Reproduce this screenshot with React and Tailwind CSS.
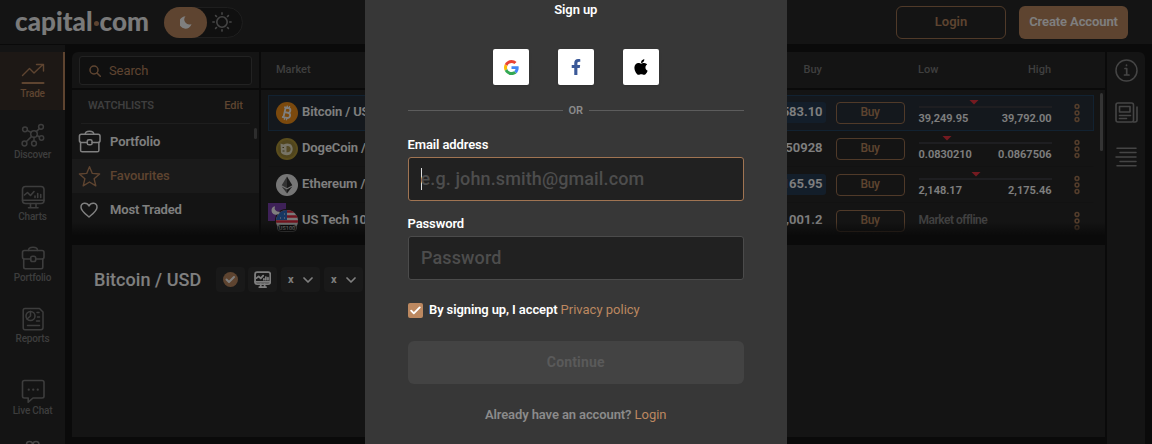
import React from "react";
import { FaFacebookF, FaApple } from "react-icons/fa";

const svg = { fill: "none", stroke: "currentColor", strokeLinecap: "round", strokeLinejoin: "round" };

function GoogleIcon() {
  return (
    <svg viewBox="0 0 48 48" className="size-[15px]">
      <path fill="#EA4335" d="M24 9.5c3.54 0 6.71 1.22 9.21 3.6l6.85-6.85C35.9 2.38 30.47 0 24 0 14.62 0 6.51 5.38 2.56 13.22l7.98 6.19C12.43 13.72 17.74 9.5 24 9.5z" />
      <path fill="#4285F4" d="M46.98 24.55c0-1.57-.15-3.09-.38-4.55H24v9.02h12.94c-.58 2.96-2.26 5.48-4.78 7.18l7.73 6c4.51-4.18 7.09-10.36 7.09-17.65z" />
      <path fill="#FBBC05" d="M10.53 28.59c-.48-1.45-.76-2.99-.76-4.59s.27-3.14.76-4.59l-7.98-6.19C.92 16.46 0 20.12 0 24c0 3.88.92 7.54 2.56 10.78l7.97-6.19z" />
      <path fill="#34A853" d="M24 48c6.48 0 11.93-2.13 15.89-5.81l-7.73-6c-2.15 1.45-4.92 2.3-8.16 2.3-6.26 0-11.57-4.22-13.47-9.91l-7.98 6.19C6.51 42.62 14.62 48 24 48z" />
    </svg>
  );
}

function TradeIcon() {
  return (
    <svg {...svg} viewBox="0 0 24 24" strokeWidth="1.4" className="size-6">
      <path d="M1.5 13.5 8.5 6.5l4.5 4.5 9-8.5M15.5 2.5H22.5v6.5" />
      <path d="M1.5 21h21" strokeWidth="2" />
    </svg>
  );
}

function DiscoverIcon() {
  return (
    <svg {...svg} viewBox="0 0 24 24" strokeWidth="1.5" className="size-6">
      <circle cx="13" cy="11" r="3.3" />
      <circle cx="4" cy="6.3" r="2.4" />
      <circle cx="20" cy="3.8" r="2.4" />
      <circle cx="20.5" cy="15" r="2.2" />
      <circle cx="3.5" cy="20.5" r="2.4" />
      <circle cx="13" cy="20.5" r="2.4" />
      <path d="m6.2 7.4 4 2.1M15.2 8.6l3.2-3M16 12.5l2.6 1.5M5.2 18.7l5.4-5.3M13 14.3v3.8" />
    </svg>
  );
}

function ChartsIcon({ className = "size-6", w = "1.6" }) {
  return (
    <svg {...svg} viewBox="0 0 24 24" strokeWidth={w} className={className}>
      <rect x="1.5" y="1.5" width="21.5" height="17" rx="3" />
      <path d="M1.5 15.2h21.5M9.5 18.5v4M15 18.5v4M7.5 22.8h9.5" />
      <path d="M3.5 10 6.5 7.5l3 3 3.5-4" />
      <path d="M14 12.5v-1.5M16.7 12.5V8.5M19.7 12.5V9.5" />
    </svg>
  );
}

function CaseIcon({ className = "size-6" }) {
  return (
    <svg {...svg} viewBox="0 0 24 24" strokeWidth="1.6" className={className}>
      <path d="M7.5 4.5C7.5 2.5 8.5 1.3 12 1.3s4.5 1.2 4.5 3.2" />
      <path d="M9.7 13H3.5c-1.3 0-2-.7-2-2V6.5c0-1.3.7-2 2-2h17.5c1.3 0 2 .7 2 2V11c0 1.3-.7 2-2 2h-6.2" />
      <path d="M2.7 13v8c0 1.2.5 1.7 1.7 1.7h15.7c1.2 0 1.7-.5 1.7-1.7v-8" />
      <rect x="9.7" y="10.2" width="5" height="5.3" rx="1.8" />
    </svg>
  );
}

function ReportsIcon() {
  return (
    <svg {...svg} viewBox="0 0 24 24" strokeWidth="1.5" className="size-6">
      <path d="M4 1.5h14.5l3.5 3.5v15.5c0 1.5-.5 2.2-2 2.2H4c-1.3 0-1.8-.7-1.8-2V3.3C2.2 2 2.8 1.5 4 1.5z" />
      <circle cx="9.5" cy="9" r="4.5" />
      <path d="M9.5 4.5V9l-3.5 3M16 5.5h2M16.5 10h2M15.5 14h3M6.5 18.5h12" />
    </svg>
  );
}

function ChatIcon() {
  return (
    <svg {...svg} viewBox="0 0 24 24" strokeWidth="1.6" className="size-6">
      <path d="M3.5 1.5h17.5c1.3 0 2 .5 2 1.8v14c0 1.2-.7 1.7-2 1.7H12l-4.8 4.2V19H3.5c-1.3 0-2-.5-2-1.7v-14c0-1.3.7-1.8 2-1.8z" />
      <path d="M7.7 10.7h.1M12.2 10.7h.1M16.7 10.7h.1" strokeWidth="2.2" />
    </svg>
  );
}

function NavItem({ icon, label, active, className = "" }) {
  return (
    <div
      className={
        "flex h-[58px] w-[65px] shrink-0 flex-col items-center border-r-2 pt-[10px] pl-[2px] " +
        (active ? "border-[#bc8860] bg-[#3a312b] text-[#bc8860] " : "border-transparent text-[#7a7a7a] ") +
        className
      }
    >
      {icon}
      <span className="mt-[2px] text-[10px] leading-[12px] font-medium tracking-[-0.2px]">{label}</span>
    </div>
  );
}

function BitcoinCoin() {
  return (
    <svg viewBox="0 0 22 22" className="size-[22px]">
      <circle cx="11" cy="11" r="11" fill="#f7931a" />
      <g transform="rotate(13 11 11)" fill="none" stroke="#fff" strokeWidth="1.8">
        <path d="M8.5 6v10M7 6h4.5c3 0 3 4.6 0 4.6H8.5h3.500c3.5 0 3.5 5.2 0 5.2H7" />
        <path d="M9.8 3.8V6M12 3.8V6M9.8 16v2.2M12 16v2.2" strokeWidth="1.3" />
      </g>
    </svg>
  );
}

function DogeCoin() {
  return (
    <svg viewBox="0 0 22 22" className="size-[22px]">
      <circle cx="11" cy="11" r="11" fill="#b59a3a" />
      <circle cx="11" cy="11" r="9" fill="#a08a3a" />
      <path d="M4.5 5.5 7.5 6.5c3-1.5 7-1.5 8.5 1.5 1.5 3 .5 6.5-2 8.5-3 1.5-7.5.5-9-2z" fill="#efe8cc" />
      <path d="M10.5 8h1.2c4 0 4 6.2 0 6.200h-1.200z" fill="#a8924a" />
      <path d="M6.5 9.5h1.5M6.5 13h2" stroke="#6e602f" strokeWidth="1.2" />
    </svg>
  );
}

function EtherCoin() {
  return (
    <svg viewBox="0 0 22 22" className="size-[22px]">
      <circle cx="11" cy="11" r="11" fill="#ececec" />
      <path d="m11 2.5-5.3 8.8L11 14.3z" fill="#666" />
      <path d="m11 2.5 5.3 8.8L11 14.3z" fill="#333" />
      <path d="M5.7 12.5 11 19.5v-4z" fill="#666" />
      <path d="M16.3 12.5 11 19.5v-4z" fill="#333" />
    </svg>
  );
}

function UsCoin() {
  return (
    <div className="relative size-[22px]">
      <svg viewBox="0 0 22 22" className="size-[22px]">
        <defs>
          <clipPath id="us-disc">
            <circle cx="11" cy="11" r="11" />
          </clipPath>
        </defs>
        <g clipPath="url(#us-disc)">
          <rect width="22" height="22" fill="#f4f4f4" />
          <path d="M0 1.5h22M0 6.5h22M0 11.5h22" stroke="#e0263c" strokeWidth="2.5" />
          <rect width="11" height="10" fill="#2f6fc4" />
          <path d="M4 8h1M8 8h1M8 4h1" stroke="#fff" strokeWidth="1.2" />
        </g>
        <rect x="1.5" y="14.5" width="19" height="7" rx="3.5" fill="#161616" stroke="#eee" strokeWidth=".8" />
        <text x="11" y="20" textAnchor="middle" fontSize="5.5" fontWeight="700" fill="#fff" fontFamily="Roboto, sans-serif">
          US100
        </text>
      </svg>
      <svg viewBox="0 0 18 18" className="absolute -top-[7px] -left-[8px] size-[18px]">
        <path d="M0 0h18v6C11 6 7 11 7 18H0z" fill="#7d42b0" />
        <path d="M7 3.2a4.3 4.3 0 1 0 5 5.3A4 4 0 0 1 7 3.2z" fill="#fff" />
      </svg>
    </div>
  );
}

const markets = [
  { name: "Bitcoin / USD", icon: <BitcoinCoin />, price: "39,583.10", low: "39,249.95", high: "39,792.00", at: 41.8, hot: true, selected: true },
  { name: "DogeCoin / USD", icon: <DogeCoin />, price: "0.0850928", low: "0.0830210", high: "0.0867506", at: 21.4 },
  { name: "Ethereum / USD", icon: <EtherCoin />, price: "2,165.95", low: "2,148.17", high: "2,175.46", at: 43, hot: true },
  { name: "US Tech 100", icon: <UsCoin />, price: "14,001.2" },
];

function MarketRow({ m }) {
  return (
    <div
      className={
        "flex h-9 shrink-0 items-center border pr-[13.5px] pb-px pl-[7px] " +
        (m.selected ? "border-[#254562] bg-[#28313a]" : "border-transparent border-b-[#242424]")
      }
    >
      {m.icon}
      <span className="ml-[4px] flex-1 pb-px text-[13px] font-semibold tracking-[-0.1px] text-white">{m.name}</span>
      <span
        className={
          "h-[21px] rounded-[3px] pr-[3px] pl-2 text-[13px] leading-[20px] font-semibold text-white " +
          (m.hot ? "bg-[#273d54]" : "")
        }
      >
        {m.price}
      </span>
      <span className="ml-[10px] h-[22px] w-[69px] rounded-[4px] border border-[#a07452] text-center text-[12px] leading-[19px] font-medium tracking-[-0.4px] text-[#bc8860]">
        Buy
      </span>
      <div className="ml-[14px] w-[133px] text-[11px] font-semibold text-white">
        {m.low ? (
          <div className="flex flex-col pt-[2px]">
            <div className="relative mt-[4px] h-[2px] bg-[#3c3c42]">
              <svg
                viewBox="0 0 10 5"
                className="absolute -top-[6px] h-[5px] w-[10px] -translate-x-1/2"
                style={{ left: m.at + "%" }}
              >
                <path d="M.5 0h9L5 4.5z" fill="#e83440" />
              </svg>
            </div>
            <div className="mt-[4px] flex justify-between leading-[13px]">
              <span>{m.low}</span>
              <span>{m.high}</span>
            </div>
          </div>
        ) : (
          <span className="text-[12px] font-semibold tracking-[-0.5px] text-[#828282]">Market offline</span>
        )}
      </div>
      <svg viewBox="0 0 6 20" fill="none" stroke="#a87a56" strokeWidth="1.5" className="ml-[22px] h-5 w-1.5">
        <circle cx="3" cy="3.5" r="1.9" />
        <circle cx="3" cy="10" r="1.9" />
        <circle cx="3" cy="16.5" r="1.9" />
      </svg>
    </div>
  );
}

function Chevron() {
  return (
    <svg {...svg} viewBox="0 0 10 6" strokeWidth="1.7" className="h-[6px] w-[10px]">
      <path d="m1 1 4 4 4-4" />
    </svg>
  );
}

function Header() {
  return (
    <header className="flex h-11 shrink-0 items-center bg-[#282828] pr-[24px] pl-[14px]">
      <div className="flex w-[150px] items-baseline pb-[3px] pl-px font-['Lato'] text-[26px] leading-[28px] font-black tracking-[0.05px] text-[#f4f4f4]">
        capital
        <span className="mx-px size-[5px] -translate-y-[5px] rounded-full bg-[#bc8860]" />
        com
      </div>
      <div className="flex h-[31px] w-[79px] items-center rounded-full border border-[#3c3c3c] bg-[#212121]">
        <div className="-ml-px flex h-[31px] w-[43px] items-center justify-center rounded-full bg-[#bc8860]">
          <svg viewBox="0 0 12 13" className="h-[13px] w-3">
            <path d="M5.5.3a5 5 0 0 0 6 7.7A6.2 6.2 0 1 1 5.5.3z" fill="#fff" />
          </svg>
        </div>
        <svg {...svg} viewBox="0 0 20 20" strokeWidth="1.6" className="ml-[5px] size-5 text-[#8a8a8a]">
          <circle cx="10" cy="10" r="5.2" />
          <path d="M10 .9v1.4M10 17.7v1.4M.9 10h1.4M17.7 10h1.4M3.6 3.6l.9.9M15.5 15.5l.9.9M3.6 16.4l.9-.9M15.5 4.5l.9-.9" />
        </svg>
      </div>
      <div className="flex-1" />
      <button className="h-[33px] w-[110px] rounded-[6px] border border-[#a07452] pb-px text-[13px] font-semibold text-[#bc8860]">
        Login
      </button>
      <button className="ml-[13px] h-[33px] w-[109px] rounded-[6px] bg-[#bc8860] pb-px text-[13px] font-semibold tracking-[-0.1px] text-white">
        Create Account
      </button>
    </header>
  );
}

function Watchlists() {
  return (
    <div className="flex w-[187px] shrink-0 flex-col overflow-hidden rounded-tl-[6px]">
      <div className="h-9 shrink-0 bg-[#282828] pt-1 pl-[7px]">
        <div className="flex h-[29px] w-[173px] items-center rounded-[3px] border border-[#444] bg-[#212121] pl-[9px] text-[#bc8860]">
          <svg {...svg} viewBox="0 0 12 12" strokeWidth="1.5" className="size-3">
            <circle cx="5" cy="5" r="4" />
            <path d="m8 8 3.3 3.3" />
          </svg>
          <span className="ml-[8px] text-[13px] tracking-[-0.1px]">Search</span>
        </div>
      </div>
      <div className="mt-[2px] min-h-0 flex-1 bg-[#282828]">
        <div className="flex h-[33px] items-center justify-between px-[16px] text-[11px]">
          <span className="font-semibold tracking-[-0.1px] text-[#7c7c7c]">WATCHLISTS</span>
          <span className="font-medium text-[#bc8860]">Edit</span>
        </div>
        <div className="mx-[9px] h-px bg-[#3c3c3c]" />
        <div className="flex h-[35px] items-center pl-[6px] text-white">
          <CaseIcon className="size-[23px]" />
          <span className="ml-[9px] flex-1 text-[13px] font-semibold tracking-[-0.1px]">Portfolio</span>
          <i className="mr-[2px] mb-4 h-[11px] w-[3px] rounded-sm bg-[#5a5a5a]" />
        </div>
        <div className="flex h-[34px] items-center bg-[#343434] pl-[6px] text-[#bc8860]">
          <svg {...svg} viewBox="0 0 23 23" strokeWidth="1.4" className="size-[23px]">
            <path d="m11.500 1.700 2.800 6.700 7.300.6-5.500 4.700 1.700 7.100-6.300-3.800-6.300 3.800 1.700-7.100L1.400 9l7.300-.6z" />
          </svg>
          <span className="ml-[9px] text-[13px] font-medium tracking-[-0.1px]">Favourites</span>
        </div>
        <div className="flex h-[34px] items-center pl-[8px] text-white">
          <svg {...svg} viewBox="0 0 18 16" strokeWidth="1.5" className="h-4 w-[18px]">
            <path d="M9 15C5.5 12 1 8.8 1 5.2 1 .5 7 0 9 4c2-4 8-3.500 8 1.200C17 8.800 12.500 12 9 15z" />
          </svg>
          <span className="ml-[12px] text-[13px] font-semibold tracking-[-0.15px]">Most Traded</span>
        </div>
        <i className="mt-[9px] ml-[41px] block h-px w-[3px] bg-[#8a8a8a]" />
      </div>
    </div>
  );
}

function Markets() {
  return (
    <div className="ml-[2px] flex min-w-0 flex-1 flex-col">
      <div className="flex h-9 shrink-0 items-center bg-[#282828] pr-[54px] pl-[15px] text-[11px] font-medium text-[#7e7e7e]">
        <span className="flex-1">Market</span>
        <span>Buy</span>
        <div className="ml-[96px] flex w-[133px] justify-between">
          <span>Low</span>
          <span>High</span>
        </div>
      </div>
      <div className="mt-[2px] flex min-h-0 flex-1 overflow-hidden bg-[#282828]">
        <div className="flex flex-1 flex-col pt-[5px] pl-[7px]">
          {markets.map((m) => (
            <MarketRow key={m.name} m={m} />
          ))}
        </div>
        <i className="mt-[3px] mr-[2px] ml-[6px] h-[58px] w-[3px] rounded-sm bg-[#686868]" />
      </div>
    </div>
  );
}

function RightRail() {
  return (
    <div className="ml-[2px] flex w-[38px] flex-col items-center rounded-tr-[6px] bg-[#282828] pt-[7px] text-[#8a8a8a]">
      <svg {...svg} viewBox="0 0 23 23" strokeWidth="1.5" className="size-[23px]">
        <circle cx="11.5" cy="11.5" r="10.5" />
        <path d="M10 9.5h1.7V16M9.5 16h4.5M11.5 6.2v.2" strokeWidth="1.7" />
      </svg>
      <svg {...svg} viewBox="0 0 23 21" strokeWidth="1.6" className="mt-[20px] h-[21px] w-[23px]">
        <rect x="1" y="1" width="17.5" height="19" rx="2" />
        <path d="M18.5 20h1.5c1.5 0 2-.7 2-2V5M4.5 13.5h11M4.5 16.5h7" />
        <rect x="4.5" y="4.5" width="10.5" height="5.5" />
      </svg>
      <svg {...svg} viewBox="0 0 22 20" strokeWidth="1.5" className="mt-[24px] h-5 w-[22px]">
        <path d="M2 1.2h19M5 5.6h16M1 10h20M5 14.4h16M2 18.8h19" />
      </svg>
    </div>
  );
}

function SignUp() {
  return (
    <div className="flex h-full w-[422.5px] flex-col bg-[#373737] px-[43px] text-[13px] font-semibold tracking-[-0.11px] text-white">
      <div className="mt-[2px] text-center leading-[15px]">Sign up</div>
      <div className="mt-[32.4px] flex justify-center gap-[29px]">
        <div className="flex size-9 items-center justify-center rounded-[2px] bg-white pl-px shadow">
          <GoogleIcon />
        </div>
        <div className="flex size-9 items-center justify-center rounded-[2px] bg-white shadow">
          <FaFacebookF className="size-4 text-[#3b5998]" />
        </div>
        <div className="flex size-9 items-center justify-center rounded-[2px] bg-white shadow">
          <FaApple className="size-[18px] text-black" />
        </div>
      </div>
      <div className="mt-[18.6px] flex h-[13px] items-center gap-[6px] text-[11px] text-[#8b8b8b]">
        <i className="h-px flex-1 bg-[#5c5c5c]" />
        <span className="pt-[2px]">OR</span>
        <i className="h-px flex-1 bg-[#5c5c5c]" />
      </div>
      <div className="mt-[20px] leading-[15px]">Email address</div>
      <div className="mt-[5px] flex h-[44px] shrink-0 items-center rounded-[3px] border border-[#a07452] bg-[#212121] pl-[12px] text-[18px] font-medium tracking-[0.12px] text-[#4d4d4d]">
        <i className="-mr-px h-[22px] w-px bg-[#ddd]" />
        <span className="pb-px">e.g. john.smith@gmail.com</span>
      </div>
      <div className="mt-[15px] leading-[15px]">Password</div>
      <div className="mt-[5px] flex h-[44px] shrink-0 items-center rounded-[3px] border border-[#4b4b4b] bg-[#212121] pl-[12.5px] text-[18px] font-medium tracking-[0.12px] text-[#4d4d4d]">
        Password
      </div>
      <div className="mt-[22px] flex h-[16px] items-center">
        <span className="mt-px flex size-[15px] items-center justify-center rounded-[2px] bg-[#bc8860]">
          <svg {...svg} viewBox="0 0 11 9" strokeWidth="1.9" className="h-[9px] w-[11px]">
            <path d="m1.2 4.7 2.6 2.6 5.9-5.9" />
          </svg>
        </span>
        <span className="ml-[6.5px]">
          By signing up, I accept <span className="font-normal tracking-normal text-[#bc8860]">Privacy policy</span>
        </span>
      </div>
      <div className="mt-[23px] flex h-[43px] shrink-0 items-center justify-center rounded-[6px] bg-[#434343] text-[14px] font-bold tracking-[0.15px] text-[#5a5a5a]">
        Continue
      </div>
      <div className="mt-[23px] text-center leading-[15px] text-[#8b8b8b]">
        Already have an account? <span className="font-normal tracking-normal text-[#bc8860]">Login</span>
      </div>
    </div>
  );
}

export default function App() {
  return (
    <div className="relative flex h-[444px] w-[1152px] flex-col overflow-hidden bg-[#141414] font-['Roboto',sans-serif]">
      <Header />
      <div className="mt-px flex min-h-0 flex-1">
        <nav className="flex w-[65px] shrink-0 flex-col gap-[3.3px] overflow-hidden bg-[#282828] pt-[7px]">
          <NavItem icon={<TradeIcon />} label="Trade" active />
          <NavItem icon={<DiscoverIcon />} label="Discover" />
          <NavItem icon={<ChartsIcon />} label="Charts" />
          <NavItem icon={<CaseIcon />} label="Portfolio" />
          <NavItem icon={<ReportsIcon />} label="Reports" />
          <NavItem icon={<ChatIcon />} label="Live Chat" className="mt-[10.5px]" />
          <svg {...svg} viewBox="0 0 24 24" strokeWidth="1.5" className="mt-[2px] ml-[21px] size-6 shrink-0 text-[#8a8a8a]">
            <circle cx="8.5" cy="12.5" r="3" />
            <circle cx="15" cy="12.5" r="3" />
          </svg>
        </nav>
        <main className="ml-[7px] flex flex-1 pt-[7px]">
          <div className="flex w-[1033px] flex-col">
            <div className="relative flex h-[184px] shrink-0">
              <Watchlists />
              <Markets />
              <div className="absolute inset-x-0 bottom-0 h-[14px] bg-linear-to-b from-transparent to-[#141414]" />
            </div>
            <div className="mt-[9px] h-[192px] shrink-0 bg-[#282828] pt-[22px] pl-[22px] text-white">
              <div className="flex h-[25px] items-center">
                <h1 className="w-[122px] text-[18px] font-medium tracking-[0.05px] whitespace-nowrap">Bitcoin / USD</h1>
                <div className="flex h-[25px] w-[29px] items-center justify-center rounded-[4px] bg-[#323232]">
                  <svg {...svg} viewBox="0 0 15 15" strokeWidth="2" className="size-[15px]">
                    <circle cx="7.5" cy="7.5" r="7.5" fill="#bc8860" stroke="none" />
                    <path d="m3.5 7.5 2.5 2.5 5-5" />
                  </svg>
                </div>
                <div className="ml-[3px] flex h-[25px] w-[29px] items-center justify-center rounded-[4px] bg-[#323232]">
                  <ChartsIcon className="size-[17px]" w="2.5" />
                </div>
                {[0, 1].map((k) => (
                  <div key={k} className="ml-1 flex h-[25px] w-[39px] items-center justify-between rounded-[4px] bg-[#323232] px-[7px]">
                    <span className="pt-px text-[11px] font-bold">x</span>
                    <Chevron />
                  </div>
                ))}
              </div>
            </div>
          </div>
          <RightRail />
        </main>
      </div>
      <div className="absolute inset-0 flex bg-black/50 pl-[364.5px]">
        <SignUp />
      </div>
    </div>
  );
}
